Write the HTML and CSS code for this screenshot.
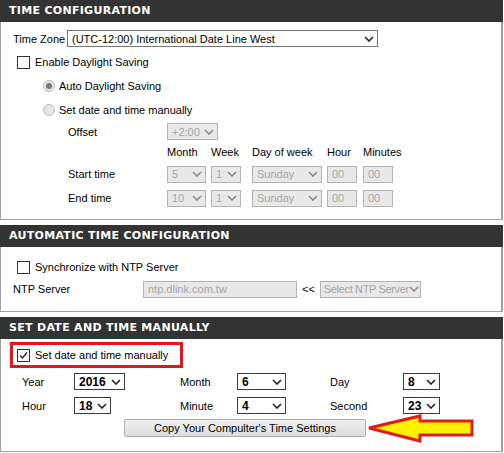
FILE: index.html
```html
<!DOCTYPE html>
<html>
<head>
<meta charset="utf-8">
<link rel="stylesheet" href="styles.css">
</head>
<body>
<div class="page">
  <section class="sec">
    <div class="head">TIME CONFIGURATION</div>
    <div class="body b1">
      <div class="row tzrow">
        <span class="tzlbl">Time Zone</span>
        <div class="sel tzsel"><span>(UTC-12:00) International Date Line West</span><svg viewBox="0 0 10 6"><polyline points="1,1 5,5 9,1"/></svg></div>
      </div>
      <div class="row r24 ind1"><span class="cb"></span><span>Enable Daylight Saving</span></div>
      <div class="row r24 ind2"><span class="radio on"></span><span>Auto Daylight Saving</span></div>
      <div class="row r24 ind2"><span class="radio"></span><span>Set date and time manually</span></div>
      <div class="dst">
        <span class="g-off">Offset</span>
        <div class="sel dis w-off g-off"><span>+2:00</span><svg viewBox="0 0 10 6"><polyline points="1,1 5,5 9,1"/></svg></div>
        <span class="g-off"></span><span class="g-off"></span><span class="g-off"></span><span class="g-off"></span>

        <span class="g-h"></span>
        <span class="g-h">Month</span>
        <span class="g-h">Week</span>
        <span class="g-h">Day of week</span>
        <span class="g-h">Hour</span>
        <span class="g-h">Minutes</span>

        <span class="g-r">Start time</span>
        <div class="sel dis w-mon g-r"><span>5</span><svg viewBox="0 0 10 6"><polyline points="1,1 5,5 9,1"/></svg></div>
        <div class="sel dis w-wk g-r"><span>1</span><svg viewBox="0 0 10 6"><polyline points="1,1 5,5 9,1"/></svg></div>
        <div class="sel dis w-day g-r"><span>Sunday</span><svg viewBox="0 0 10 6"><polyline points="1,1 5,5 9,1"/></svg></div>
        <div class="inp w-num g-r">00</div>
        <div class="inp w-num g-r">00</div>

        <span class="g-r">End time</span>
        <div class="sel dis w-mon g-r"><span>10</span><svg viewBox="0 0 10 6"><polyline points="1,1 5,5 9,1"/></svg></div>
        <div class="sel dis w-wk g-r"><span>1</span><svg viewBox="0 0 10 6"><polyline points="1,1 5,5 9,1"/></svg></div>
        <div class="sel dis w-day g-r"><span>Sunday</span><svg viewBox="0 0 10 6"><polyline points="1,1 5,5 9,1"/></svg></div>
        <div class="inp w-num g-r">00</div>
        <div class="inp w-num g-r">00</div>
      </div>
    </div>
  </section>

  <section class="sec">
    <div class="head">AUTOMATIC TIME CONFIGURATION</div>
    <div class="body b2">
      <div class="row r24 ind1"><span class="cb"></span><span>Synchronize with NTP Server</span></div>
      <div class="row ntprow">
        <span class="ntplbl">NTP Server</span>
        <div class="inp w-ntp">ntp.dlink.com.tw</div>
        <span class="ltlt">&lt;&lt;</span>
        <div class="sel dis w-nsel"><span>Select NTP Server</span><svg viewBox="0 0 10 6"><polyline points="1,1 5,5 9,1"/></svg></div>
      </div>
    </div>
  </section>

  <section class="sec">
    <div class="head">SET DATE AND TIME MANUALLY</div>
    <div class="body b3">
      <div class="redbox"><span class="cb checked"><svg viewBox="0 0 11 11"><polyline points="2,5.5 4.5,8 9,2.5"/></svg></span><span>Set date and time manually</span></div>
      <div class="dt">
        <span>Year</span>
        <div class="sel big w-year"><span>2016</span><svg viewBox="0 0 10 6"><polyline points="1,1 5,5 9,1"/></svg></div>
        <span>Month</span>
        <div class="sel big w-m"><span>6</span><svg viewBox="0 0 10 6"><polyline points="1,1 5,5 9,1"/></svg></div>
        <span>Day</span>
        <div class="sel big w-s"><span>8</span><svg viewBox="0 0 10 6"><polyline points="1,1 5,5 9,1"/></svg></div>

        <span>Hour</span>
        <div class="sel big w-s"><span>18</span><svg viewBox="0 0 10 6"><polyline points="1,1 5,5 9,1"/></svg></div>
        <span>Minute</span>
        <div class="sel big w-m"><span>4</span><svg viewBox="0 0 10 6"><polyline points="1,1 5,5 9,1"/></svg></div>
        <span>Second</span>
        <div class="sel big w-s"><span>23</span><svg viewBox="0 0 10 6"><polyline points="1,1 5,5 9,1"/></svg></div>
      </div>
      <div class="btnrow">
        <div class="btn">Copy Your Compulter's Time Settings</div>
        <svg class="arrow" viewBox="0 0 108 30" width="108" height="30"><polygon points="2,14 53,2 53,7 105,7 105,21 53,21 53,27"/></svg>
      </div>
    </div>
  </section>
</div>
</body>
</html>
```

FILE: styles.css
```css
* { box-sizing: border-box; }
body {
  margin: 0;
  background: #fff;
  color: #000;
  font-family: "Liberation Sans", Arial, sans-serif;
  font-size: 11px;
}
.page { width: 503px; }
.sec + .sec { margin-top: 5px; }
.head {
  height: 22px;
  background: #333333;
  color: #fff;
  font-family: "DejaVu Sans", Verdana, sans-serif;
  font-weight: bold;
  font-size: 11px;
  line-height: 22px;
  padding-left: 9px;
  letter-spacing: 0.3px;
}
.body {
  border: 1px solid #a0a0a0;
  border-top: 0;
  border-right-width: 2px;
}
.row { display: flex; align-items: center; }
.r24 { height: 24px; }
.ind1 { padding-left: 16px; }
.ind2 { padding-left: 42px; }

/* section 1 */
.b1 { padding: 8px 0 9px 0; }
.tzrow { height: 17px; margin-bottom: 3px; padding-left: 12px; }
.tzlbl { width: 54px; }
.tzsel { width: 311px; border-color: #7a7a7a; }

.cb {
  width: 13px; height: 13px;
  border: 1px solid #333;
  background: #fff;
  margin-right: 5px;
  flex: none;
  display: flex; align-items: center; justify-content: center;
}
.cb svg { width: 11px; height: 11px; fill: none; stroke: #222; stroke-width: 1.4; }
.radio {
  width: 12px; height: 12px;
  border-radius: 50%;
  border: 1px solid #bcbcbc;
  background: #e6e6e6;
  margin-right: 4px;
  flex: none;
  display: flex; align-items: center; justify-content: center;
}
.radio.on::after {
  content: "";
  width: 6px; height: 6px;
  border-radius: 50%;
  background: #777;
}

.sel {
  display: flex;
  align-items: center;
  justify-content: space-between;
  height: 17px;
  border: 1px solid #767676;
  background: #fff;
  padding: 0 3px 0 4px;
  white-space: nowrap;
  overflow: hidden;
}
.sel svg { width: 10px; height: 6px; flex: none; fill: none; stroke: #222; stroke-width: 1.6; }
.sel.dis { background: #e8e8e8; border-color: #b3b3b3; color: #a6a6a6; }
.sel.dis svg { stroke: #8a8a8a; }
.inp {
  height: 17px;
  border: 1px solid #b3b3b3;
  background: #e8e8e8;
  color: #a6a6a6;
  padding-left: 4px;
  display: flex;
  align-items: center;
}

.dst {
  display: grid;
  grid-template-columns: 99px 44px 41px 75px 36px 40px;
  grid-template-rows: 19px 21px 24px 24px;
  align-items: center;
  padding-left: 67px;
}
.w-off { width: 51px; }
.w-mon { width: 39px; }
.w-wk { width: 30px; }
.w-day { width: 70px; }
.w-num { width: 30px; }

/* section 2 */
.b2 { padding: 8px 0 13px 0; }
.ntprow { height: 18px; margin-top: 1px; padding-left: 12px; }
.ntplbl { width: 130px; }
.w-ntp { width: 154px; }
.ltlt { margin: 0 5px; }
.w-nsel { width: 101px; padding-left: 3px; letter-spacing: -0.35px; }

/* section 3 */
.b3 { padding: 3px 0 14px 0; }
.redbox {
  display: flex;
  align-items: center;
  width: 173px;
  height: 26px;
  margin-left: 9px;
  padding-left: 4px;
  border: 3px solid #e3161d;
}
.dt {
  display: grid;
  grid-template-columns: 52px 106px 57px 93px 73px 40px;
  grid-template-rows: 17px 17px;
  row-gap: 7px;
  align-items: center;
  margin-top: 5px;
  padding-left: 21px;
}
.sel.big { font-weight: bold; font-size: 12px; border-color: #3c3c3c; }
.w-year { width: 51px; }
.w-m { width: 49px; }
.w-s { width: 37px; }

.btnrow {
  display: flex;
  align-items: center;
  height: 18px;
  margin-top: 5px;
  padding-left: 123px;
}
.btn {
  width: 242px;
  height: 18px;
  border: 1px solid #adadad;
  border-radius: 2px;
  background: linear-gradient(#f0f0f0, #dddddd);
  display: flex;
  align-items: center;
  justify-content: center;
  flex: none;
}
.arrow {
  flex: none;
  margin: -6px 0 -6px 1px;
  position: relative;
  top: 1px;
}
.arrow polygon { fill: #fff200; stroke: #e01b1b; stroke-width: 3; stroke-linejoin: miter; }
```
